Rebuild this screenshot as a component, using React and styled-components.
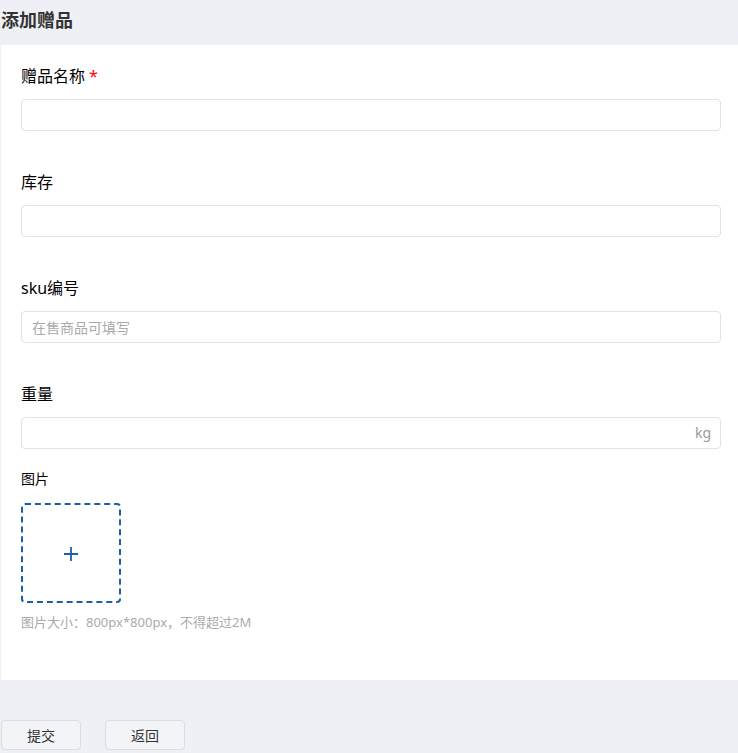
import React from "react";
import styled, { createGlobalStyle } from "styled-components";

const Global = createGlobalStyle`
  html, body { margin: 0; padding: 0; background: #eef0f5; }
  body { font-family: "Noto Sans", "Noto Sans CJK SC", sans-serif; color: #000; }
  * { box-sizing: border-box; }
`;

const Page = styled.div`
  width: 738px;
  min-height: 753px;
  background: #eef0f5;
`;

const Header = styled.div`
  height: 45px;
  padding: 8px 0 0 1px;
  font-size: 18px;
  line-height: 24px;
  font-weight: bold;
  color: #333;
`;

const Card = styled.div`
  margin-left: 1px;
  background: #fff;
  padding: 21px 17px 49px 20px;
`;

const Field = styled.div`
  display: flex;
  flex-direction: column;
  margin-bottom: ${(p) => p.$mb ?? 41}px;
`;

const Label = styled.div`
  font-size: ${(p) => p.$small ? 14 : 16}px;
  line-height: ${(p) => p.$small ? 20 : 22}px;
  margin-bottom: ${(p) => p.$small ? 14 : 11}px;
  margin-top: ${(p) => p.$small ? 0 : -1}px;
  padding-bottom: ${(p) => p.$small ? 0 : 1}px;
  color: #000;
`;

const Star = styled.span`
  color: #f00;
  margin-left: 4px;
`;

const InputWrap = styled.div`
  position: relative;
  width: 700px;
  height: 32px;
`;

const Input = styled.input`
  width: 100%;
  height: 32px;
  border: 1px solid #e2e2e2;
  border-radius: 4px;
  padding: 0 ${(p) => p.$suffix ? 34 : 10}px 0 10px;
  font-size: 14px;
  font-family: inherit;
  outline: none;
  color: #333;
  &::placeholder { color: #aaa; }
`;

const Suffix = styled.span`
  position: absolute;
  right: 10px;
  top: 0;
  line-height: 32px;
  font-size: 14px;
  color: #999;
`;

const Upload = styled.div`
  width: 100px;
  height: 100px;
  border: 2px dashed #1a5fa8;
  border-radius: 4px;
  display: flex;
  align-items: center;
  justify-content: center;
  padding-top: 2px;
`;

const Hint = styled.div`
  margin-top: 10px;
  font-size: 13px;
  line-height: 18px;
  color: #aaa;
`;

const Actions = styled.div`
  display: flex;
  gap: 24px;
  padding: 40px 0 0 1px;
`;

const Button = styled.button`
  width: 80px;
  height: 30px;
  background: #f3f4f8;
  border: 1px solid #dcdcdc;
  border-radius: 4px;
  font-size: 14px;
  font-family: inherit;
  color: #333;
  padding: 0;
`;

export default function App() {
  return (
    <Page>
      <Global />
      <Header>添加赠品</Header>
      <Card>
        <Field>
          <Label>赠品名称<Star>*</Star></Label>
          <InputWrap><Input /></InputWrap>
        </Field>
        <Field>
          <Label>库存</Label>
          <InputWrap><Input /></InputWrap>
        </Field>
        <Field>
          <Label>sku编号</Label>
          <InputWrap><Input placeholder="在售商品可填写" /></InputWrap>
        </Field>
        <Field $mb={20}>
          <Label>重量</Label>
          <InputWrap>
            <Input $suffix />
            <Suffix>kg</Suffix>
          </InputWrap>
        </Field>
        <Field $mb={0}>
          <Label $small>图片</Label>
          <Upload>
            <svg width="16" height="16" viewBox="0 0 16 16">
              <path d="M8 1v14M1 8h14" stroke="#1a5fa8" strokeWidth="1.8" fill="none" />
            </svg>
          </Upload>
          <Hint>图片大小：800px*800px，不得超过2M</Hint>
        </Field>
      </Card>
      <Actions>
        <Button>提交</Button>
        <Button>返回</Button>
      </Actions>
    </Page>
  );
}
